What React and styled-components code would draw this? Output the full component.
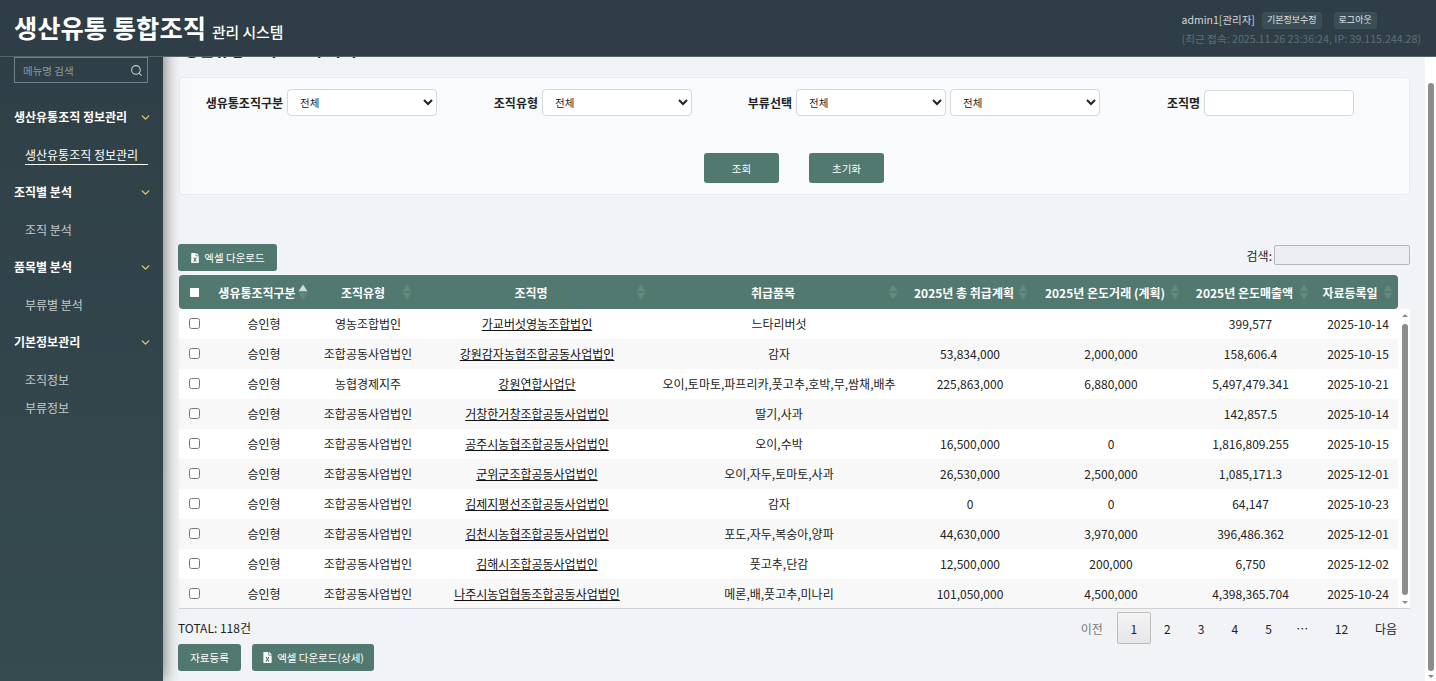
import React, { useLayoutEffect, useRef } from 'react'
import styled, { createGlobalStyle } from 'styled-components'
import { FaFileExcel } from 'react-icons/fa'
import { ChevronDown, Search } from 'lucide-react'

const MENU = [
    { title: '생산유통조직 정보관리', items: [{ label: '생산유통조직 정보관리', active: true }] },
    { title: '조직별 분석', items: [{ label: '조직 분석' }] },
    { title: '품목별 분석', items: [{ label: '부류별 분석' }] },
    { title: '기본정보관리', items: [{ label: '조직정보' }, { label: '부류정보' }] },
]

const COLUMNS = [
    { label: '생유통조직구분', pad: 8, sort: 'asc' },
    { label: '조직유형', pad: 4 },
    { label: '조직명', pad: 6 },
    { label: '취급품목', pad: 8 },
    { label: '2025년 총 취급계획', pad: 8 },
    { label: '2025년 온도거래 (계획)', pad: 8 },
    { label: '2025년 온도매출액', pad: 10 },
    { label: '자료등록일', pad: 12 },
]

const ROWS = [
    ['승인형', '영농조합법인', '가교버섯영농조합법인', '느타리버섯', '', '', '399,577', '2025-10-14'],
    ['승인형', '조합공동사업법인', '강원감자농협조합공동사업법인', '감자', '53,834,000', '2,000,000', '158,606.4', '2025-10-15'],
    ['승인형', '농협경제지주', '강원연합사업단', '오이,토마토,파프리카,풋고추,호박,무,쌈채,배추', '225,863,000', '6,880,000', '5,497,479.341', '2025-10-21'],
    ['승인형', '조합공동사업법인', '거창한거창조합공동사업법인', '딸기,사과', '', '', '142,857.5', '2025-10-14'],
    ['승인형', '조합공동사업법인', '공주시농협조합공동사업법인', '오이,수박', '16,500,000', '0', '1,816,809.255', '2025-10-15'],
    ['승인형', '조합공동사업법인', '군위군조합공동사업법인', '오이,자두,토마토,사과', '26,530,000', '2,500,000', '1,085,171.3', '2025-12-01'],
    ['승인형', '조합공동사업법인', '김제지평선조합공동사업법인', '감자', '0', '0', '64,147', '2025-10-23'],
    ['승인형', '조합공동사업법인', '김천시농협조합공동사업법인', '포도,자두,복숭아,양파', '44,630,000', '3,970,000', '396,486.362', '2025-12-01'],
    ['승인형', '조합공동사업법인', '김해시조합공동사업법인', '풋고추,단감', '12,500,000', '200,000', '6,750', '2025-12-02'],
    ['승인형', '조합공동사업법인', '나주시농업협동조합공동사업법인', '메론,배,풋고추,미나리', '101,050,000', '4,500,000', '4,398,365.704', '2025-10-24'],
]

const PAGES = ['1', '2', '3', '4', '5', '…', '12']

const FONT = `"Noto Sans CJK KR", "Noto Sans", sans-serif`

const GlobalStyle = createGlobalStyle`
    * {
        box-sizing: border-box;
    }
    html, body {
        margin: 0;
        height: 100%;
        overflow: hidden;
    }
    body {
        font-family: ${FONT};
        font-size: 12px;
        color: #222;
    }
    select, input, button {
        font-family: ${FONT};
    }
`

const Shell = styled.div`
    position: relative;
    display: grid;
    grid-template-columns: 163px 1fr;
    height: 100vh;
`

const Header = styled.header`
    position: absolute;
    inset: 0 0 auto 0;
    z-index: 3;
    height: 57px;
    padding: 0 15px 0 14px;
    display: flex;
    justify-content: space-between;
    background: #2f3e46;
    border-bottom: 1px solid #55656c;
`

const Brand = styled.div`
    display: flex;
    align-items: baseline;
    gap: 6px;
    padding-top: 9px;
    color: #fff;
    font-weight: 700;
`

const BrandName = styled.h1`
    margin: 0;
    font-size: 25.3px;
    line-height: 36px;
`

const BrandSub = styled.span`
    font-size: 14.8px;
    font-weight: 500;
`

const Account = styled.div`
    display: flex;
    flex-direction: column;
    align-items: flex-start;
    gap: 2px;
    padding-top: 11px;
`

const AccountRow = styled.div`
    display: flex;
    align-items: center;
    color: #cfd6d9;
    font-size: 10.5px;
    line-height: 18px;
`

const Chip = styled.button`
    height: 17px;
    padding: 0 4px;
    margin-left: ${(p) => p.$gap}px;
    border: 1px solid #3d4f57;
    border-radius: 3px;
    background: #3a4d55;
    color: #dfe4e6;
    font-size: 9px;
    line-height: 14px;
`

const LastLogin = styled.div`
    color: #5d6f76;
    font-size: 10.65px;
    line-height: 16px;
    white-space: nowrap;
`

const Sidebar = styled.aside`
    position: relative;
    z-index: 2;
    padding: 57px 15px 0 14px;
    background: linear-gradient(to bottom, #2f3e46, #354b50);
    box-shadow: 0 0 16px rgba(0, 0, 0, 0.6);
`

const MenuSearch = styled.div`
    display: flex;
    align-items: center;
    justify-content: space-between;
    height: 26px;
    margin-bottom: 25px;
    padding: 0 4px 0 8px;
    border: 1px solid #6f8086;
    color: #8c9a9f;
    font-size: 10.5px;
    svg {
        color: #c4ccce;
    }
`

const MenuGroup = styled.div`
    height: 75px;
`

const MenuTitle = styled.div`
    display: flex;
    align-items: center;
    justify-content: space-between;
    height: 18px;
    margin-right: -4px;
    color: #fff;
    font-size: 12px;
    font-weight: 700;
    line-height: 18px;
    white-space: nowrap;
    svg {
        color: #e9c46a;
    }
`

const MenuItem = styled.div`
    margin: ${(p) => (p.$first ? 20 : 10)}px 0 0 11px;
    height: 18px;
    color: ${(p) => (p.$active ? '#fff' : '#c3cccd')};
    font-size: 12px;
    line-height: 18px;
    white-space: nowrap;
    box-shadow: ${(p) => (p.$active ? '0 1px 0 #fff' : 'none')};
`

const Main = styled.main`
    height: 100vh;
    overflow: hidden;
    background: #fff;
`

const Content = styled.div`
    width: 1262px;
    height: 765px;
    padding: 119px 15px 0 16px;
    background: #f1f3f6;
`

const PageTitle = styled.h2`
    margin: 0 0 14px 4px;
    font-size: 17px;
    line-height: 28px;
    font-weight: 700;
    color: #222;
`

const FilterPanel = styled.section`
    height: 118px;
    padding-top: 11px;
    background: #f9fafb;
    border: 1px solid #e8eaed;
    border-radius: 4px;
`

const FilterGrid = styled.div`
    display: grid;
    grid-template-columns: 257px 255px 408px 254px;
`

const Field = styled.label`
    display: flex;
    justify-content: flex-end;
    align-items: center;
    gap: 4px;
    font-size: 12px;
    font-weight: 700;
    white-space: nowrap;
`

const Select = styled.select`
    width: 150px;
    height: 27px;
    padding: 0 8px;
    background: #fff;
    border: 1px solid #d5d8dc;
    border-radius: 4px;
    font-size: 10.5px;
    color: #222;
`

const TextInput = styled.input`
    width: 150px;
    height: 26px;
    background: #fff;
    border: 1px solid #d5d8dc;
    border-radius: 4px;
`

const FilterActions = styled.div`
    display: flex;
    justify-content: center;
    gap: 30px;
    margin-top: 37px;
    padding-right: 1px;
`

const ActionButton = styled.button`
    display: inline-flex;
    align-items: center;
    justify-content: center;
    gap: 4px;
    width: ${(p) => p.$width}px;
    height: ${(p) => p.$height || 27}px;
    padding: 0;
    border: 0;
    border-radius: 3px;
    background: #52796f;
    color: #fff;
    font-size: 10.5px;
    white-space: nowrap;
`

const TableTools = styled.div`
    display: flex;
    justify-content: space-between;
    align-items: flex-start;
    margin: 49px 0 4px -1px;
`

const TableSearch = styled.label`
    display: flex;
    align-items: center;
    gap: 2px;
    margin-top: 1px;
    font-size: 12px;
`

const TableSearchInput = styled.input`
    width: 136px;
    height: 20px;
    background: #eceef1;
    border: 1px solid #b4b8bc;
    border-radius: 2px;
`

const HeadRow = styled.div`
    display: grid;
    grid-template-columns: 30px 104px 104px 234px 252px 130px 152px 129px 84px;
    width: 1219px;
    height: 34px;
    background: #52796f;
    border-radius: 4px;
    color: #fff;
    font-size: 12px;
    font-weight: 700;
`

const HeadCell = styled.div`
    position: relative;
    display: flex;
    align-items: center;
    justify-content: center;
    padding-right: ${(p) => p.$pad}px;
    white-space: nowrap;
`

const SortIcon = styled.svg`
    position: absolute;
    right: 5px;
    top: 8px;
    width: 10px;
    height: 18px;
`

const HeadCheck = styled.span`
    width: 9px;
    height: 9px;
    margin-left: 1px;
    background: #fff;
`

const BodyWrap = styled.div`
    position: relative;
    height: 300px;
    overflow: hidden;
    background: #fff;
    border-bottom: 1px solid #cfd2d5;
`

const BodyRow = styled.div`
    display: grid;
    grid-template-columns: 30px 110px 98px 240px 244px 138px 144px 135px 80px;
    width: 1219px;
    height: 30px;
    align-items: center;
    background: ${(p) => (p.$odd ? '#f8f8f8' : '#fff')};
`

const BodyCell = styled.div`
    text-align: center;
    white-space: nowrap;
    line-height: 18px;
    color: #222;
`

const OrgLink = styled.a`
    color: #111;
    text-decoration: underline;
`

const RowCheck = styled.input`
    margin: 0 0 2px 0;
    width: 11px;
    height: 11px;
`

const Rail = styled.div`
    position: absolute;
    top: 0;
    right: 0;
    bottom: 0;
    width: ${(p) => p.$width}px;
    display: flex;
    flex-direction: column;
    align-items: center;
    background: #fff;
`

const RailArrow = styled.span`
    flex: none;
    display: flex;
    align-items: center;
    justify-content: center;
    width: 100%;
    height: ${(p) => p.$size}px;
    &::before {
        content: '';
        border-left: 3px solid transparent;
        border-right: 3px solid transparent;
        border-${(p) => (p.$up ? 'bottom' : 'top')}: 3px solid #8a8a8a;
    }
`

const RailThumb = styled.span`
    flex: 1;
    width: 6px;
    margin: ${(p) => p.$before}px 0 ${(p) => p.$after}px;
    background: #8c8c8c;
    border-radius: 3px;
`

const TableFooter = styled.div`
    display: flex;
    justify-content: space-between;
    align-items: flex-start;
    margin: 3px 2px 0 -1px;
`

const Total = styled.div`
    margin-top: 7px;
    font-size: 12px;
    line-height: 18px;
`

const Pager = styled.div`
    display: flex;
    align-items: center;
    font-size: 12px;
`

const PagerButton = styled.span`
    display: flex;
    align-items: center;
    justify-content: center;
    min-width: ${(p) => p.$width || 33.7}px;
    height: 32px;
    color: ${(p) => (p.$muted ? '#777' : '#222')};
    border: 1px solid ${(p) => (p.$current ? '#bdbdbd' : 'transparent')};
    border-radius: 2px;
    background: ${(p) => (p.$current ? 'linear-gradient(to bottom, #f4f4f4, #e6e6e6)' : 'none')};
`

const BottomActions = styled.div`
    display: flex;
    gap: 11px;
    margin: 0 0 0 -1px;
`

const SortArrows = ({ active }) => (
    <SortIcon viewBox="0 0 10 18">
        <path d="M5 1.5 9.5 8.2H.5Z" fill={active ? '#cfdcd7' : '#648a7f'} />
        <path d="M5 16.5.5 9.8h9Z" fill="#648a7f" />
    </SortIcon>
)

const ScrollRail = ({ width, arrow, before, after }) => (
    <Rail $width={width}>
        <RailArrow $up $size={arrow} />
        <RailThumb $before={before} $after={after} />
        <RailArrow $size={arrow} />
    </Rail>
)

export default function App() {
    const mainRef = useRef(null)

    // 화면이 아래까지 스크롤된 상태
    useLayoutEffect(() => {
        mainRef.current.scrollTop = mainRef.current.scrollHeight
    }, [])

    return (
        <Shell>
            <GlobalStyle />
            <Header>
                <Brand>
                    <BrandName>생산유통 통합조직</BrandName>
                    <BrandSub>관리 시스템</BrandSub>
                </Brand>
                <Account>
                    <AccountRow>
                        admin1[관리자]
                        <Chip $gap={7}>기본정보수정</Chip>
                        <Chip $gap={12}>로그아웃</Chip>
                    </AccountRow>
                    <LastLogin>(최근 접속: 2025.11.26 23:36:24, IP: 39.115.244.28)</LastLogin>
                </Account>
            </Header>
            <Sidebar>
                <MenuSearch>
                    메뉴명 검색
                    <Search size={13} strokeWidth={2} />
                </MenuSearch>
                {MENU.map((group) => (
                    <MenuGroup key={group.title}>
                        <MenuTitle>
                            {group.title}
                            <ChevronDown size={13} strokeWidth={2.6} />
                        </MenuTitle>
                        {group.items.map((item, i) => (
                            <MenuItem key={item.label} $first={i === 0} $active={item.active}>
                                {item.label}
                            </MenuItem>
                        ))}
                    </MenuGroup>
                ))}
            </Sidebar>
            <Main ref={mainRef}>
                <Content>
                    <PageTitle>생산유통조직 - 조직 목록</PageTitle>
                    <FilterPanel>
                        <FilterGrid>
                            <Field>
                                생유통조직구분
                                <Select>
                                    <option>전체</option>
                                </Select>
                            </Field>
                            <Field>
                                조직유형
                                <Select>
                                    <option>전체</option>
                                </Select>
                            </Field>
                            <Field>
                                부류선택
                                <Select>
                                    <option>전체</option>
                                </Select>
                                <Select>
                                    <option>전체</option>
                                </Select>
                            </Field>
                            <Field>
                                조직명
                                <TextInput />
                            </Field>
                        </FilterGrid>
                        <FilterActions>
                            <ActionButton $width={75} $height={30}>조회</ActionButton>
                            <ActionButton $width={75} $height={30}>초기화</ActionButton>
                        </FilterActions>
                    </FilterPanel>
                    <TableTools>
                        <ActionButton $width={99}>
                            <FaFileExcel size={10} />
                            엑셀 다운로드
                        </ActionButton>
                        <TableSearch>
                            검색:
                            <TableSearchInput />
                        </TableSearch>
                    </TableTools>
                    <HeadRow>
                        <HeadCell $pad={0}>
                            <HeadCheck />
                        </HeadCell>
                        {COLUMNS.map((col) => (
                            <HeadCell key={col.label} $pad={col.pad}>
                                {col.label}
                                <SortArrows active={col.sort === 'asc'} />
                            </HeadCell>
                        ))}
                    </HeadRow>
                    <BodyWrap>
                        {ROWS.map((row, r) => (
                            <BodyRow key={row[2]} $odd={r % 2 === 1}>
                                <BodyCell>
                                    <RowCheck type="checkbox" />
                                </BodyCell>
                                {row.map((value, c) => (
                                    <BodyCell key={c}>{c === 2 ? <OrgLink>{value}</OrgLink> : value}</BodyCell>
                                ))}
                            </BodyRow>
                        ))}
                        <ScrollRail width={11} arrow={12} before={3} after={1} />
                    </BodyWrap>
                    <TableFooter>
                        <Total>TOTAL: 118건</Total>
                        <Pager>
                            <PagerButton $muted $width={50}>이전</PagerButton>
                            {PAGES.map((page) => (
                                <PagerButton key={page} $current={page === '1'} $width={page === '12' ? 45 : undefined}>
                                    {page}
                                </PagerButton>
                            ))}
                            <PagerButton $width={44}>다음</PagerButton>
                        </Pager>
                    </TableFooter>
                    <BottomActions>
                        <ActionButton $width={63}>자료등록</ActionButton>
                        <ActionButton $width={122}>
                            <FaFileExcel size={11} />
                            엑셀 다운로드(상세)
                        </ActionButton>
                    </BottomActions>
                </Content>
            </Main>
            <ScrollRail width={10} arrow={10} before={73} after={0} />
        </Shell>
    )
}
